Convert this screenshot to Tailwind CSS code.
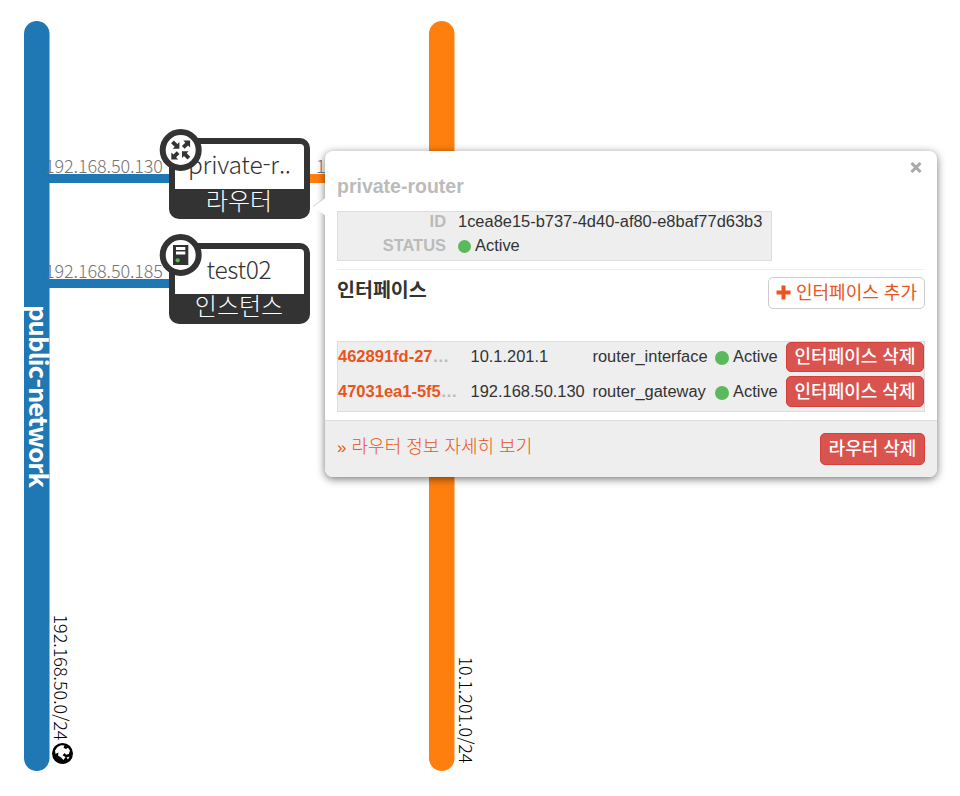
<!DOCTYPE html>
<html lang="ko">
<head>
<meta charset="utf-8">
<title>Network Topology</title>
<script src="https://cdn.jsdelivr.net/npm/@tailwindcss/browser@4"></script>
</head>
<body class="bg-white">
<main class="relative w-[960px] h-[796px] overflow-hidden bg-white font-['Liberation_Sans','Noto_Sans_CJK_KR',sans-serif] text-[16.45px] text-[#333]">
  <svg class="absolute inset-0 font-['Noto_Sans_CJK_KR',sans-serif] font-light" width="960" height="796" viewBox="0 0 960 796">
    <defs>
      <g id="node">
        <rect x="169" y="138" width="141" height="81" rx="10" fill="#333"/>
        <path d="M175 189V144H300a4 4 0 0 1 4 4V189Z" fill="#fff"/>
      </g>
    </defs>
    <!-- networks -->
    <rect x="24" y="21" width="25.5" height="750" rx="12.75" fill="#1f77b4"/>
    <rect x="429" y="21" width="25.5" height="750" rx="12.75" fill="#ff7f0e"/>
    <!-- links -->
    <rect x="49" y="174" width="122" height="9" fill="#1f77b4"/>
    <rect x="49" y="279" width="122" height="9" fill="#1f77b4"/>
    <rect x="308" y="174" width="122" height="9" fill="#ff7f0e"/>
    <g font-size="18" fill="#757575">
      <text x="45" y="173" textLength="118">192.168.50.130</text>
      <text x="45" y="278" textLength="118">192.168.50.185</text>
      <text x="316" y="173">10.1.201.1</text>
    </g>
    <!-- nodes -->
    <use href="#node"/>
    <use href="#node" y="105"/>
    <g font-size="24.5" text-anchor="middle">
      <text x="239.5" y="174" fill="#333" textLength="103">private-r..</text>
      <text x="239" y="210" fill="#fff" font-size="24">라우터</text>
      <text x="239" y="279" fill="#333" textLength="65">test02</text>
      <text x="239" y="315" fill="#fff" font-size="24">인스턴스</text>
    </g>
    <circle cx="180.7" cy="150" r="18" fill="#fff" stroke="#333" stroke-width="6"/>
    <g fill="#333" transform="translate(180.7 150)">
      <path d="M-1.3 -1.3H-8L-6 -3.3L-9.6 -6.8L-6.8 -9.6L-3.3 -6L-1.3 -8Z"/>
      <path d="M1.3 1.3H8L6 3.3L9.6 6.8L6.8 9.6L3.3 6L1.3 8Z"/>
      <path d="M9.4 -9.4V-2.6L7.3 -4.6L3.9 -1.2L1.2 -3.9L4.6 -7.3L2.6 -9.4Z"/>
      <path d="M-9.4 9.4V2.6L-7.3 4.6L-3.9 1.2L-1.2 3.9L-4.6 7.3L-2.6 9.4Z"/>
    </g>
    <circle cx="180.7" cy="255" r="18" fill="#fff" stroke="#333" stroke-width="6"/>
    <rect x="173" y="245" width="15.3" height="20" fill="#333"/>
    <rect x="176" y="247" width="9.3" height="3" fill="#fff"/>
    <rect x="176" y="251.5" width="9.3" height="3" fill="#fff"/>
    <circle cx="177.7" cy="260.3" r="2.1" fill="#5cb85c"/>
    <!-- network labels -->
    <text transform="translate(28.8 305) rotate(90)" font-size="25.5" font-weight="700" fill="#fff" textLength="183">public-network</text>
    <text transform="translate(54 614.5) rotate(90)" font-size="18" fill="#000" textLength="126">192.168.50.0/24</text>
    <text transform="translate(459 656.5) rotate(90)" font-size="18" fill="#000" textLength="107">10.1.201.0/24</text>
    <circle cx="62.5" cy="753.5" r="10.5" fill="#000"/>
    <path d="M55 750.5L57.5 747L61 745.2L64.5 745.4L63.5 747.8L66 749L68 747.8L70 750.5L68.8 754L66 754.8L64.8 753L62.5 755.2L65.5 757L63.5 760L61 757.5L58 755.5L58.5 752.5L55.5 754Z" fill="#fff"/>
    <path d="M66.5 757.5L69.5 756.5L68 759.5Z" fill="#fff"/>
  </svg>

  <section class="absolute left-[325px] top-[151px] w-[612px] h-[326px] rounded-[8px] bg-white shadow-[0_2px_8px_rgba(0,0,0,0.55)] flex flex-col">
    <svg class="absolute -left-[12px] top-[46px]" width="13" height="20" viewBox="0 0 13 20"><path d="M13 0.5L0 9.5L13 19Z" fill="#fff"/><path d="M12 1L0 9.5" stroke="#ccc" stroke-width="0.8"/></svg>
    <button class="absolute right-[15px] top-[10px]" aria-label="close"><svg width="12" height="13" viewBox="0 0 12 13"><path d="M1.5 2L10.5 11M10.5 2L1.5 11" stroke="#aaa" stroke-width="3.1"/></svg></button>
    <div class="flex flex-col h-[269px] px-[12px] shrink-0">
      <h3 class="mt-[21.5px] h-[26px] leading-[26px] text-[19.5px] font-bold text-[#bbb]">private-router</h3>
      <dl class="mt-[12.5px] w-[435px] h-[50px] border border-[#ddd] bg-[#eee] grid grid-cols-[108px_1fr] gap-x-[12px] auto-rows-[24px] leading-[18px]">
        <dt class="text-right font-bold text-[#bbb]">ID</dt>
        <dd class="whitespace-nowrap">1cea8e15-b737-4d40-af80-e8baf77d63b3</dd>
        <dt class="text-right font-bold text-[#bbb]">STATUS</dt>
        <dd class="flex items-start gap-[4px]"><span class="size-[13px] rounded-full bg-[#5cb85c] mt-[4px]"></span>Active</dd>
      </dl>
      <hr class="mt-[8px] border-t border-[#eee]">
      <div class="flex justify-between mt-[7px]">
        <h4 class="font-['Noto_Sans_CJK_KR',sans-serif] text-[19.5px] leading-[24px] font-bold">인터페이스</h4>
        <button class="w-[157px] h-[32px] border border-[#ccc] rounded-[5px] bg-white text-[#e95420] text-[18px] leading-[26px] font-['Noto_Sans_CJK_KR',sans-serif] flex items-start pl-[7px] gap-[5px]"><svg class="mt-[7px]" width="15" height="15" viewBox="0 0 15 15"><path d="M5.5 0.5h4v5h5v4h-5v5h-4v-5h-5v-4h5z" fill="#e95420"/></svg><span class="whitespace-nowrap">인터페이스 추가</span></button>
      </div>
      <div class="mt-[32px] w-[588px] h-[71px] border border-[#ddd] bg-[#eee] leading-[28px] grid grid-cols-[132.5px_122px_122.5px_71px_138px] auto-rows-[35px] whitespace-nowrap">
        <div class="font-bold text-[#bbb] text-[16.5px]"><a class="text-[#e95420]">462891fd-27</a>…</div>
        <div>10.1.201.1</div>
        <div>router_interface</div>
        <div class="flex gap-[4px]"><span class="size-[14px] rounded-full bg-[#5cb85c] mt-[8.5px]"></span>Active</div>
        <button class="h-[30px] border border-[#d43f3a] bg-[#d9534f] rounded-[5px] text-white text-[18px] leading-[22px] pb-[4px] font-medium font-['Noto_Sans_CJK_KR',sans-serif]">인터페이스 삭제</button>
        <div class="font-bold text-[#bbb] text-[16.5px]"><a class="text-[#e95420]">47031ea1-5f5</a>…</div>
        <div>192.168.50.130</div>
        <div>router_gateway</div>
        <div class="flex gap-[4px]"><span class="size-[14px] rounded-full bg-[#5cb85c] mt-[8.5px]"></span>Active</div>
        <button class="-mt-px h-[31px] border border-[#d43f3a] bg-[#d9534f] rounded-[5px] text-white text-[18px] leading-[24px] pb-[4px] font-medium font-['Noto_Sans_CJK_KR',sans-serif]">인터페이스 삭제</button>
      </div>
    </div>
    <footer class="flex-1 border-t border-[#ddd] bg-[#eee] rounded-b-[8px] px-[12px] pt-[12px] flex justify-between font-['Noto_Sans_CJK_KR',sans-serif] text-[18px]">
      <a class="text-[#e95420] font-light leading-[24px] whitespace-nowrap"><span class="font-['Liberation_Sans',sans-serif] text-[17px]">»</span> 라우터 정보 자세히 보기</a>
      <button class="w-[105px] h-[32px] border border-[#d43f3a] bg-[#d9534f] rounded-[5px] text-white leading-[24px] pb-[5px] font-medium">라우터 삭제</button>
    </footer>
  </section>
</main>
</body>
</html>
